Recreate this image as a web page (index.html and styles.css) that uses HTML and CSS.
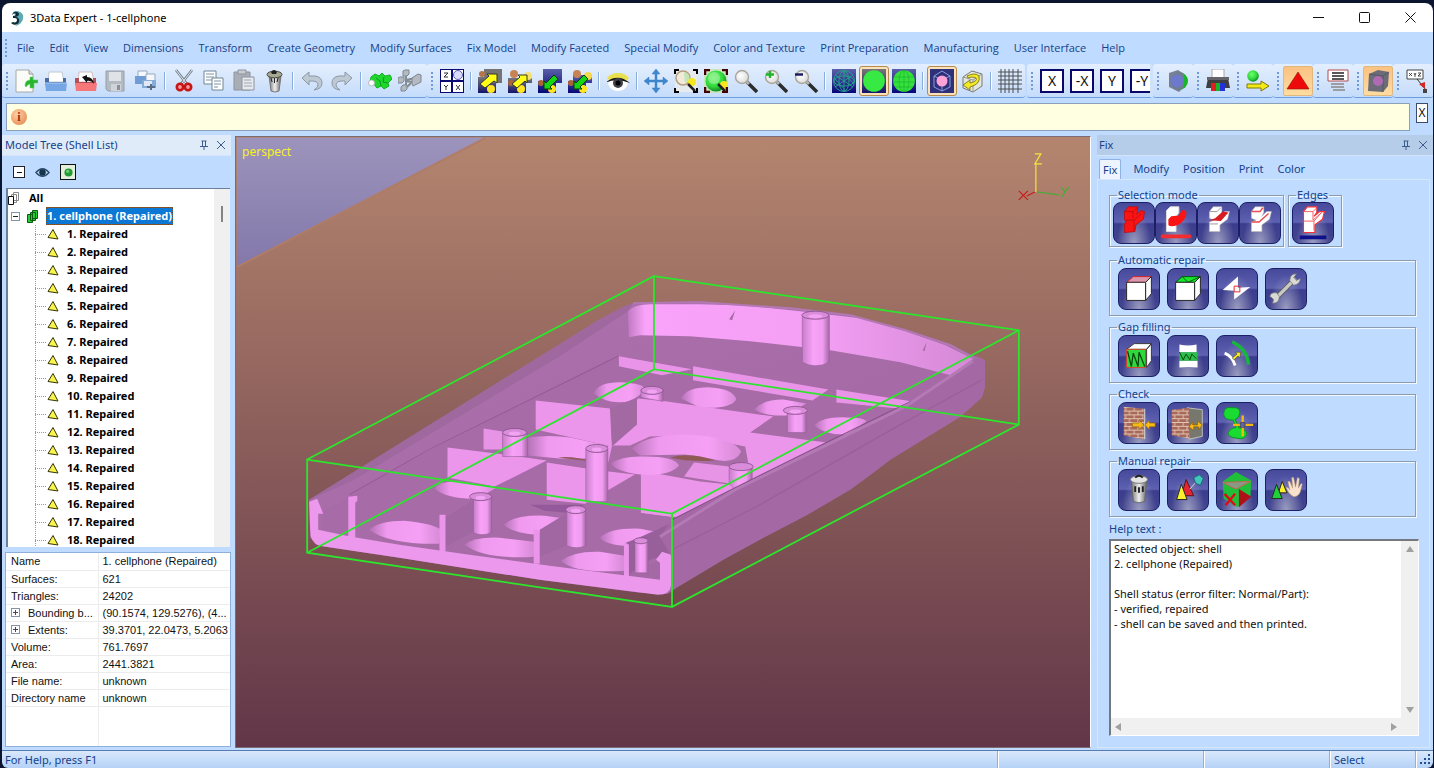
FILE: index.html
```html
<!DOCTYPE html>
<html lang="en">
<head>
<meta charset="utf-8">
<title>3Data Expert - 1-cellphone</title>
<link rel="stylesheet" href="styles.css">
</head>
<body>
<svg class="defs" aria-hidden="true">
  <defs>
    <linearGradient id="gBg" x1="0" y1="0" x2="0" y2="1"><stop offset="0" stop-color="#b4856e"/><stop offset="1" stop-color="#623648"/></linearGradient>
    <linearGradient id="gSky" x1="0" y1="0" x2="0" y2="1"><stop offset="0" stop-color="#9c94bc"/><stop offset="1" stop-color="#8378aa"/></linearGradient>
    <linearGradient id="gPost" x1="0" y1="0" x2="1" y2="0"><stop offset="0" stop-color="#c87ecb"/><stop offset=".4" stop-color="#f8a2f8"/><stop offset=".75" stop-color="#f09cf0"/><stop offset="1" stop-color="#a467a4"/></linearGradient>
    <linearGradient id="gRing" x1="0" y1="0" x2="1" y2="0"><stop offset="0" stop-color="#b472b6"/><stop offset=".25" stop-color="#f09aef"/><stop offset=".7" stop-color="#f6a0f5"/><stop offset="1" stop-color="#d68ad6"/></linearGradient>
    <linearGradient id="gWall" x1="0" y1="0" x2="1" y2="0"><stop offset="0" stop-color="#c079c2"/><stop offset=".05" stop-color="#f9a4fa"/><stop offset=".55" stop-color="#f49ff4"/><stop offset="1" stop-color="#d489d5"/></linearGradient>
    <linearGradient id="gSide" x1="0" y1="0" x2="1" y2="1"><stop offset="0" stop-color="#ae72ae"/><stop offset="1" stop-color="#a066a2"/></linearGradient>
    <radialGradient id="gGreen" cx=".4" cy=".35" r=".7"><stop offset="0" stop-color="#6dff6d"/><stop offset=".6" stop-color="#2fd83a"/><stop offset="1" stop-color="#0c7a22"/></radialGradient>
    <radialGradient id="gLens" cx=".4" cy=".4" r=".6"><stop offset="0" stop-color="#fff"/><stop offset="1" stop-color="#dcdcdc"/></radialGradient>
    <linearGradient id="gGray" x1="0" y1="0" x2="1" y2="0"><stop offset="0" stop-color="#777"/><stop offset=".5" stop-color="#eee"/><stop offset="1" stop-color="#666"/></linearGradient>
    <linearGradient id="gNavy" x1="0" y1="0" x2="0" y2="1"><stop offset="0" stop-color="#5c5fa8"/><stop offset="1" stop-color="#07077a"/></linearGradient>
    <linearGradient id="gBox" x1="0" y1="0" x2="0" y2="1"><stop offset="0" stop-color="#777"/><stop offset="1" stop-color="#14146c"/></linearGradient>
  </defs>

  <symbol id="i-logo" viewBox="0 0 14 16"><path d="M3 2c3-2 8-1 10 3 1 5-2 10-8 11 3-2 4-4 3-6z" fill="#5cabb2"/><path d="M2 5c1-4 6-4 7-1 0 2-2 3-4 3 3 0 5 2 4 5-1 3-5 4-8 1l2-1c2 1 4 0 4-2s-2-2-4-2V6c2 0 3-1 3-2-1-1-2-1-4 1z" fill="#0e2c38"/></symbol>
  <symbol id="i-new" viewBox="0 0 24 24"><path d="M2 1h13l4 4v18H2z" fill="#fbfcf8" stroke="#a8a8a8"/><path d="M15 1v4h4" fill="#ddd" stroke="#999"/><path d="M11 17q0-6 5-6V8h3v3h5v3h-4v5h-4v-4q-2 0-4 3z" fill="#27b52e" stroke="#68d268" stroke-width=".6"/></symbol>
  <symbol id="i-open" viewBox="0 0 24 24"><path d="M5 3h13l2 10H4z" fill="#fff" stroke="#c3c9d0"/><path d="M1 9h4v4h14V9h3v7H1z" fill="#4a6ba4"/><path d="M1 14h22l-1 8H2z" fill="#76a7e4"/><path d="M1 14h22" stroke="#aacdf8"/></symbol>
  <symbol id="i-openr" viewBox="0 0 24 24"><path d="M5 3h13l2 10H4z" fill="#fff" stroke="#d6bcbc"/><path d="M1 9h4v4h14V9h3v7H1z" fill="#b4505a"/><path d="M1 14h22l-1 8H2z" fill="#f5777a"/><path d="M8 8l5-2v2q6 0 7 7-3-4-7-3v2z" fill="#111"/></symbol>
  <symbol id="i-save" viewBox="0 0 24 24"><path d="M2 2h18v20H4l-2-2z" fill="#b4bac2" stroke="#989ea8"/><path d="M5 3h12v9H5z" fill="#dfe3e8"/><path d="M7 15h10v7H7z" fill="#d0d4da"/><path d="M13 16h3v5h-3z" fill="#8a9098"/></symbol>
  <symbol id="i-saveall" viewBox="0 0 24 24"><path d="M4 2h9v8H4z" fill="#f4f7fb" stroke="#99a9bd"/><path d="M1 7h14v8H1z" fill="#6f9bd6"/><path d="M12 5h9v9h-9z" fill="#f4f7fb" stroke="#99a9bd"/><path d="M8 11h14v8H8z" fill="#85acd8"/><path d="M10 12h8v5h-8z" fill="#dfe8f4"/><path d="M16 15h2v2h3v2h-3v2h-2v-2h-3v-2h3z" fill="#5a6b88"/></symbol>
  <symbol id="i-cut" viewBox="0 0 24 24"><path d="M4 1l11 14M20 1L9 15" stroke="#6f7b88" stroke-width="2.6"/><path d="M4 1l10 13M20 1L10 14" stroke="#e8edf2"/><circle cx="8" cy="18" r="3.2" fill="#f29a9a" stroke="#c81414" stroke-width="2.6"/><circle cx="16" cy="18" r="3.2" fill="#f29a9a" stroke="#c81414" stroke-width="2.6"/></symbol>
  <symbol id="i-copy" viewBox="0 0 24 24"><path d="M2 2h12v13H2z" fill="#fff" stroke="#6f8594"/><path d="M4 5h8M4 8h8M4 11h6" stroke="#7d93a5"/><path d="M10 9h11v12H10z" fill="#fff" stroke="#6f8594"/><path d="M12 12h7M12 15h7M12 18h4" stroke="#7d93a5"/></symbol>
  <symbol id="i-paste" viewBox="0 0 24 24"><path d="M2 3h16v18H2z" fill="#a9aeb6" stroke="#8c939d"/><path d="M6 1h8v4H6z" fill="#c8ccd2" stroke="#8c939d"/><path d="M10 8h12v13H10z" fill="#e6e9ee" stroke="#8c939d"/><path d="M12 11h7M12 14h8M12 17h8" stroke="#a0a7b0"/></symbol>
  <symbol id="i-trash" viewBox="0 0 24 24"><path d="M7 7h12l-2 15q-4 2-8 0z" fill="url(#gGray)" stroke="#777"/><path d="M9 9l1 4M12.500 9v5M16 9l-1 4" stroke="#222"/><ellipse cx="12.500" cy="5.500" rx="7.500" ry="3.300" fill="#a7a894" stroke="#44443a"/><path d="M9 3q3-4 6 0l-1 2h-4z" fill="#222"/></symbol>
  <symbol id="i-undo" viewBox="0 0 24 24"><path d="M2 9l7-6v4h6q7 1 7 7t-8 7q5-3 4-6-1-3-5-3H9v4z" fill="#bfc9d4" stroke="#8c98a6"/></symbol>
  <symbol id="i-redo" viewBox="0 0 24 24"><path d="M22 9l-7-6v4H9q-7 1-7 7t8 7q-5-3-4-6 1-3 5-3h4v4z" fill="#bfc9d4" stroke="#8c98a6"/></symbol>
  <symbol id="i-shells" viewBox="0 0 24 24"><path d="M3 8l4-3 4 2 3-3 3 3 5-1 2 4-4 4 1 3-5 3-3-3-4 2-4-5-3-1z" fill="#1ed62c" stroke="#12b022"/><path d="M8 9l4 3 1 5M16 8l-1 5 5 1" fill="none" stroke="#0c9a1a"/><circle cx="3.500" cy="14" r="3" fill="#fff" stroke="#b8b8b8"/></symbol>
  <symbol id="i-shells2" viewBox="0 0 24 24"><path d="M8 7v4l9-2M7 12l8 1M8 12v6M13 14l-4 4" fill="none" stroke="#858b93" stroke-width="2"/><g fill="#b4bac2" stroke="#80868e"><path d="M5 2l2-1h4v4l-2 2H5zM0 9l2-1h4v4l-2 2H0zM14 9l6-4 3 1v7l-8 4-1-2zM3 18l2-2h4v4l-2 2H3z"/></g></symbol>
  <symbol id="i-views" viewBox="0 0 24 24"><path d="M0 0h24v24H0z" fill="#0a0a72"/><path d="M1 1h10v10H1zM13 1h10v10H13zM1 13h10v10H1zM13 13h10v10H13z" fill="#fff"/><path d="M4 4h4l-4 4h4M4 16l2 2 2-2M6 18v3M16 16l4 5M20 16l-4 5" fill="none" stroke="#333"/><circle cx="18" cy="6" r="4.500" fill="#d9dcf6" stroke="#5c61b4"/></symbol>
  <symbol id="i-tr1" viewBox="0 0 24 24"><path d="M0 8h18v16H0z" fill="url(#gBox)"/><path d="M6 0h18v14H6z" fill="#747474"/><circle cx="4" cy="5" r="3" fill="#b4754c"/><circle cx="13" cy="20" r="4" fill="#ffe61e"/><path d="M2 15L11 7 9 5h10v9l-3-2-9 7z" fill="#ffff14" stroke="#333"/></symbol>
  <symbol id="i-tr2" viewBox="0 0 24 24"><path d="M0 9h24v5h-6v10H0z" fill="url(#gBox)"/><circle cx="6" cy="5" r="4" fill="#c88355"/><circle cx="20" cy="7" r="4" fill="#f5e072"/><circle cx="13" cy="20" r="4" fill="#ffe61e"/><circle cx="3" cy="14" r="3" fill="#a9643c"/><path d="M4 15L12 8l-2-2h9v8l-2-2-8 7z" fill="#ffff14" stroke="#333"/></symbol>
  <symbol id="i-tr3" viewBox="0 0 24 24"><path d="M0 12h5V0h19v14h-6v10H0z" fill="url(#gNavy)"/><circle cx="3" cy="14" r="3" fill="#a9643c"/><circle cx="14" cy="20" r="4" fill="#ffe61e"/><path d="M16 6l4 4-8 8 2 2H6v-8l2 2z" fill="#14d614" stroke="#043a04"/></symbol>
  <symbol id="i-tr4" viewBox="0 0 24 24"><path d="M0 12h5V6h19v8h-6v10H0z" fill="url(#gNavy)"/><circle cx="9" cy="5" r="4" fill="#c88355"/><circle cx="20" cy="7" r="4" fill="#f5d84a"/><circle cx="3" cy="14" r="3" fill="#a9643c"/><circle cx="15" cy="20" r="4" fill="#ffe61e"/><path d="M16 6l4 4-8 8 2 2H6v-8l2 2z" fill="#14d614" stroke="#043a04"/></symbol>
  <symbol id="i-eye" viewBox="0 0 24 24"><path d="M1 9Q5 4 12 4t11 5l-3 3H4z" fill="#e9e04e"/><path d="M2 14q10-9 20 0-2 8-10 8T2 14z" fill="#fff"/><path d="M0 13Q12 4 24 14q-12-5-24-1z" fill="#181818"/><circle cx="12" cy="14" r="5" fill="#3f4148"/><circle cx="12" cy="14" r="2.500" fill="#000"/></symbol>
  <symbol id="i-move" viewBox="0 0 24 24"><path d="M12 0l4 5h-3v6h6V8l5 4-5 4v-3h-6v6h3l-4 5-4-5h3v-6H5v3l-5-4 5-4v3h6V5H8z" fill="#3f86cc" stroke="#3f86cc" stroke-width=".5"/></symbol>
  <symbol id="i-zfit" viewBox="0 0 24 24"><path d="M1 1h22v22H1z" fill="#e7ebee"/><circle cx="9" cy="9" r="7" fill="#f1ead9" stroke="#b49c7e" stroke-width="1.500"/><path d="M10 3q7 1 5 9l-4 2z" fill="#bfe6b4"/><circle cx="18" cy="13" r="4" fill="#f6e71e"/><path d="M14 15l7 7" stroke="#222" stroke-width="2.500"/><path d="M1 5V1h4M19 1h4v4M23 19v4h-4M5 23H1v-4" stroke="#000" stroke-width="2" fill="none"/></symbol>
  <symbol id="i-zsel" viewBox="0 0 24 24"><path d="M0 0h24v24H0z" fill="#c7e6c0"/><circle cx="12" cy="12" r="10.500" fill="url(#gGreen)"/><circle cx="10" cy="9" r="6" fill="#a5f0a5" opacity=".6"/><circle cx="20" cy="16" r="4" fill="#f6e71e"/><path d="M14 15l7 7" stroke="#222" stroke-width="2.500"/><path d="M1 6V1h5M18 1h5v5M23 18v5h-5M6 23H1v-5" stroke="#400" stroke-width="2.500" fill="none"/></symbol>
  <symbol id="i-zoom" viewBox="0 0 24 24"><path d="M12 12l11 11" stroke="#2b2b2b" stroke-width="3.400"/><path d="M11 11l4 4" stroke="#b4b4b4" stroke-width="3"/><circle cx="8" cy="8" r="6.500" fill="url(#gLens)" stroke="#a9a59a" stroke-width="1.400"/></symbol>
  <symbol id="i-zin" viewBox="0 0 24 24"><use href="#i-zoom"/><path d="M6 2v7M2 5.500h8" stroke="#1eb428" stroke-width="2.400"/></symbol>
  <symbol id="i-zout" viewBox="0 0 24 24"><use href="#i-zoom"/><path d="M1 5.500h8" stroke="#15155c" stroke-width="2.400"/></symbol>
  <symbol id="i-wire" viewBox="0 0 24 24"><path d="M0 0h24v24H0z" fill="url(#gNavy)"/><g fill="none" stroke="#259b8c"><circle cx="12" cy="12" r="10.500"/><ellipse cx="12" cy="12" rx="5" ry="10"/><ellipse cx="12" cy="12" rx="10" ry="5"/><path d="M3 6l18 12M3 18L21 6M12 1v22M2 9l12 13M10 2l12 13"/></g></symbol>
  <symbol id="i-solid" viewBox="0 0 24 24"><path d="M0 0h24v24H0z" fill="url(#gBox)"/><circle cx="12" cy="12" r="10.800" fill="#37ea43"/></symbol>
  <symbol id="i-mesh" viewBox="0 0 24 24"><path d="M0 0h24v24H0z" fill="url(#gNavy)"/><circle cx="12" cy="12" r="10.800" fill="#33e03c"/><g fill="none" stroke="#1fae2e" stroke-width=".6"><ellipse cx="12" cy="12" rx="5" ry="10.500"/><path d="M2 8h20M1 13h22M3 18h18M12 1v22"/></g></symbol>
  <symbol id="i-bbox" viewBox="0 0 24 24"><path d="M0 0h24v24H0z" fill="#2e3078"/><path d="M12 2l8 5v11l-8 4-8-4V7zM4 7l8 4 8-4M12 11v11" fill="none" stroke="#8e9ae0"/><circle cx="12" cy="12" r="5.500" fill="#ffa2d8"/></symbol>
  <symbol id="i-rot" viewBox="0 0 24 24"><path d="M3 8l9-6 10 3v12l-9 6-10-4z" fill="#e4e8dc" stroke="#77786e"/><path d="M3 8l10 3v12M13 11l9-6" fill="none" stroke="#99998e"/><path d="M7 7q8-4 12 0 2 8-9 11v3l-7-5 7-5v3q8-2 6-5-4-2-8 0z" fill="#f2e824" stroke="#6e6810" stroke-width=".8"/></symbol>
  <symbol id="i-grid" viewBox="0 0 24 24"><path d="M3 0v24M7 0v24M11 0v24M15 0v24M20 0v24M0 3h24M0 7h24M0 11h24M0 15h24M0 20h24" stroke="#4d4f52"/></symbol>
  <symbol id="i-cut3d" viewBox="0 0 24 24"><circle cx="13" cy="12" r="9" fill="#19b428"/><path d="M3 4l9-3 6 4v13l-5 5-10-5z" fill="#747a92" opacity=".95"/><circle cx="11" cy="12" r="6.500" fill="#6c79cd"/></symbol>
  <symbol id="i-print" viewBox="0 0 24 24"><path d="M6 0h12v10H6z" fill="#fff" stroke="#a8a8a8"/><path d="M2 9h20l2 10H0z" fill="#3d3d42"/><path d="M1 8h22v3H1z" fill="#64646a"/><path d="M5 14h5v8H5z" fill="#e02020"/><path d="M10 14h4v8h-4z" fill="#19b428"/><path d="M14 14h5v8h-5z" fill="#2430d8"/></symbol>
  <symbol id="i-ballarrow" viewBox="0 0 24 24"><circle cx="7" cy="7" r="5.800" fill="url(#gGreen)"/><path d="M1 15h14v-3l8 5-8 5v-3H1z" fill="#f2ea14" stroke="#7d7810"/></symbol>
  <symbol id="i-tri" viewBox="0 0 24 24"><path d="M12 3l11 17H1z" fill="#ee0a0a" stroke="#8d1508" stroke-width=".6"/></symbol>
  <symbol id="i-list" viewBox="0 0 24 24"><path d="M2 1h20v11H2z" fill="#fff" stroke="#b04a50"/><path d="M6 4h12M6 7h12M6 10h12" stroke="#222" stroke-width="1.400"/><path d="M5 15h13M5 18h13M7 21h12" stroke="#9a9da4" stroke-width="2"/></symbol>
  <symbol id="i-cube" viewBox="0 0 24 24"><path d="M3 5l9-4 11 2-1 14-5 6-15-1z" fill="#6b6c78"/><path d="M3 5l14 2 6-4M17 7v16" fill="none" stroke="#565866"/><circle cx="12" cy="12" r="5" fill="#b06ab4"/></symbol>
  <symbol id="i-xyz" viewBox="0 0 24 24"><path d="M1 1h16v9H1z" fill="#fff" stroke="#444"/><path d="M3 4l3 3M6 4L3 7M8 4l1 2 1-2M9 6v2M12 4h3l-3 3h3" stroke="#222" fill="none" stroke-width=".8"/><path d="M11 10l9 11" stroke="#333"/><path d="M13 15l6-2v7z" fill="#d62525"/><path d="M17 20h4v4h-4z" fill="#444"/></symbol>

  <symbol id="i-pin" viewBox="0 0 10 10"><path d="M2.500 1h5M3.500 1v5M6.500 1v5M1 6.500h8M5 6v4" stroke="#3c5c8c" fill="none"/></symbol>
  <symbol id="i-x" viewBox="0 0 10 10"><path d="M1 1l8 8M9 1L1 9" stroke="#3c5c8c"/></symbol>
  <symbol id="i-warn" viewBox="0 0 12 12"><path d="M6 1l5 9.500L1 9z" fill="#f8f44a" stroke="#33330a"/></symbol>
  <symbol id="i-stack" viewBox="0 0 12 13"><path d="M5.500.500h5v8h-5zM3.500 2.500h5v8h-5z" fill="#fff" stroke="#888"/><path d="M.500 4.500h5v8h-5z" fill="#fff" stroke="#111"/></symbol>
  <symbol id="i-stackg" viewBox="0 0 12 13"><path d="M5.500.500h5v8h-5zM3.500 2.500h5v8h-5zM.500 4.500h5v8h-5z" fill="#28cc38" stroke="#0a5a12"/></symbol>

  <symbol id="b-sel1" viewBox="0 0 42 42"><path d="M11 9l4-5h10l-1 8 4-4 4 1-1 8-8 6-1 7-11 1v-9l2-3-2-1z" fill="#fb1414" stroke="#b80d10" stroke-width=".8"/><path d="M11 9h9l4-4M20 9v7M12 18h9l8-7M21 18v12" stroke="#c40e10" fill="none"/></symbol>
  <symbol id="b-sel2" viewBox="0 0 42 42"><path d="M11 8l4-4h9v6l-3 5h-5l-1 7 6 1v7H11z" fill="#fff" stroke="#ddd"/><path d="M13 17l3-3 8-1 3-5q4-2 5 3-1 8-9 12-8 3-10 0z" fill="#fb1414"/><path d="M7 35h28" stroke="#f32c30" stroke-width="4" stroke-linecap="round"/></symbol>
  <symbol id="b-sel3" viewBox="0 0 42 42"><path d="M12 9l4-5h9v6l-2 4 5-5h5l-2 8-8 6v7H12V20l5-2-5-2z" fill="#fff" stroke="#bbb" stroke-width=".6"/><path d="M12 18l6-2 8-7 6 1-8 9z" fill="#d81c22"/><path d="M12 22h9M12 9h8l4-4" stroke="#999" fill="none"/></symbol>
  <symbol id="b-sel4" viewBox="0 0 42 42"><path d="M12 9l4-5h9v6l-2 4 5-5h5l-2 8-8 6v7H12V20l5-2-5-2z" fill="#fff" stroke="#bbb" stroke-width=".6"/><path d="M12 20h8l10-9M12 9h9l3-4" fill="none" stroke="#ec4a50" stroke-width="1.500"/></symbol>
  <symbol id="b-sel5" viewBox="0 0 42 42"><path d="M11 9l4-5h10v6l-3 4 6-5h5l-2 8-8 6v8H11z" fill="#fff" stroke="#f33238" stroke-width="1.200"/><path d="M11 9h10v9l9-8M11 19h11v10M21 9l4-4M22 19l8-9" fill="none" stroke="#f35a5e"/><path d="M7 36h28" stroke="#10108a" stroke-width="4"/></symbol>
  <symbol id="b-box1" viewBox="0 0 42 42"><path d="M8 14l7-6h19l-6 6z" fill="#d998ae" stroke="#d41e26"/><path d="M8 14h20v19H8z" fill="#fff" stroke="#222"/><path d="M28 14l6-6v18l-6 7z" fill="#fff" stroke="#222"/></symbol>
  <symbol id="b-box2" viewBox="0 0 42 42"><path d="M8 14l7-6h19l-6 6z" fill="#16e82c" stroke="#064f0c"/><path d="M15 8l6 6 13-6" fill="none" stroke="#064f0c"/><path d="M8 14h20v19H8z" fill="#fff" stroke="#222"/><path d="M28 14l6-6v18l-6 7z" fill="#fff" stroke="#222"/></symbol>
  <symbol id="b-cross" viewBox="0 0 42 42"><path d="M6 22L22 8v15z" fill="#fff"/><path d="M18 20l17-1-17 13z" fill="#fff"/><path d="M18 18h6v6h-6z" fill="none" stroke="#e02028"/></symbol>
  <symbol id="b-wrench" viewBox="0 0 42 42"><path d="M9 32L31 10" stroke="#555" stroke-width="5"/><path d="M9 32L31 10" stroke="#c9c9c4" stroke-width="3.500"/><path d="M25 12q0-7 7-7l-3 4 3 3 4-2q0 6-7 7zM4 29q1-5 7-4l3 4q0 7-7 7l1-4-2-2z" fill="#d9d9d4" stroke="#777" stroke-width=".7"/></symbol>
  <symbol id="b-gap1" viewBox="0 0 42 42"><path d="M8 14l8-6h18l-5 6zM29 14l5-6v18l-5 7z" fill="#fff" stroke="#333"/><path d="M8 14h20v19H8z" fill="#2fd83c" stroke="#e23c2a"/><path d="M9 16l4 16 2-14 5 14 1-15 6 15" fill="none" stroke="#06430b" stroke-width="1.300"/></symbol>
  <symbol id="b-gap2" viewBox="0 0 42 42"><path d="M12 9q9 2 18 0v8H12zM12 26h19v7q-10-1-19 0z" fill="#fff"/><path d="M12 17h19v9H12z" fill="#2fbf4c"/><path d="M12 17l4 8 3-6 4 6 2-6 5 5" fill="none" stroke="#06430b"/></symbol>
  <symbol id="b-gap3" viewBox="0 0 42 42"><path d="M16 6q16 8 17 24" fill="none" stroke="#16b83a" stroke-width="3.500"/><path d="M8 18q8 3 11 13" fill="none" stroke="#fff" stroke-width="3"/><path d="M16 23l5-4-2-2h6l-1 6-2-2-4 4z" fill="#f6ec1e" stroke="#444" stroke-width=".7"/></symbol>
  <pattern id="pBrick" width="9" height="8" patternUnits="userSpaceOnUse"><path d="M0 0h9v8H0z" fill="#a8685a"/><path d="M0 .500h9M0 4.500h9M2 0v4M7 4v4" stroke="#e2c7b4"/></pattern>
  <symbol id="b-wall1" viewBox="0 0 42 42"><path d="M5 4l21 2v32L5 34z" fill="url(#pBrick)"/><path d="M27 6v32" stroke="#e8e2c8"/><path d="M14 21h7v-3l5 5-5 5v-3h-7zM38 21h-6v-3l-5 5 5 5v-3h6z" fill="#f7ba16" stroke="#8c5d08" stroke-width=".7"/></symbol>
  <symbol id="b-wall2" viewBox="0 0 42 42"><path d="M20 5l16 2v28l-14 3z" fill="#77776d" stroke="#d8d8c8" stroke-width=".8"/><path d="M4 7l18-2v32L4 34z" fill="url(#pBrick)"/><path d="M22 25l4-5v3h5v-4l5 4-4 5v-3h-5v4z" fill="#f7ba16" stroke="#8c5d08" stroke-width=".7"/></symbol>
  <symbol id="b-target" viewBox="0 0 42 42"><path d="M7 12q0-9 9-7 8-1 8 5-1 6-5 7l4 9q8 1 8 7-2 6-10 4-10-1-9-6 2-5 8-5l-3-8q-9 0-10-6z" fill="#19db32" stroke="#0a9420"/><circle cx="27" cy="23" r="3" fill="none" stroke="#444"/><path d="M27 13v7M27 26v9M17 23h7M30 23h8" stroke="#f5b90e" stroke-width="2.500"/></symbol>
  <symbol id="b-trash" viewBox="0 0 42 42"><path d="M13 11h16l-2 22q-6 3-12 0z" fill="url(#gGray)" stroke="#666"/><path d="M17 17v6M21 18v6M25 17v6" stroke="#222" stroke-width="2"/><ellipse cx="21" cy="10" rx="9" ry="4" fill="#e4e4e4" stroke="#777"/><path d="M17 8q4-4 8 0" fill="none" stroke="#222" stroke-width="2"/></symbol>
  <symbol id="b-pick" viewBox="0 0 42 42"><path d="M19 10l8 17H14z" fill="#e32632" stroke="#591014"/><path d="M14 15l6 16H9z" fill="#faf12c" stroke="#222"/><path d="M23 20l8-9" stroke="#ddd"/><path d="M27 8l6-3 4 4-3 7-5-2z" fill="#42c6bc" stroke="#156c70"/></symbol>
  <symbol id="b-del" viewBox="0 0 42 42"><path d="M6 12l14-10 16 9-1 17-14 11L7 30z" fill="#1fbf39"/><path d="M6 13l29-1-15 8z" fill="#889a84" stroke="#cf6059"/><path d="M23 20l13 8-13 11z" fill="#b01018"/><path d="M8 25l11 12M19 25L9 37" stroke="#d90f18" stroke-width="2.600"/></symbol>
  <symbol id="b-hand" viewBox="0 0 42 42"><path d="M17 12l5 12h-9z" fill="#faf12c" stroke="#222"/><path d="M11 15l6 15H6z" fill="#1fd03a" stroke="#222"/><path d="M21 18q3 0 4 3l-2-9h2l3 7-1-11h2l2 10 2-10 2 1-1 10 3-5 1 1-2 8q-2 5-7 5-5-2-8-10z" fill="#f8e2cb" stroke="#b79a7d" stroke-width=".6"/></symbol>
</svg>

<div class="app">
  <header class="titlebar">
    <svg class="logo"><use href="#i-logo"/></svg>
    <h1>3Data Expert - 1-cellphone</h1>
    <div class="wincontrols">
      <button aria-label="Minimize"><svg viewBox="0 0 11 11"><path d="M0 5.500h11"/></svg></button>
      <button aria-label="Maximize"><svg viewBox="0 0 11 11"><rect x=".500" y=".500" width="10" height="10" rx="1"/></svg></button>
      <button aria-label="Close"><svg viewBox="0 0 11 11"><path d="M.500.500l10 10M10.500.500l-10 10"/></svg></button>
    </div>
  </header>

  <nav class="menubar">
    <span class="grip"></span>
    <button>File</button><button>Edit</button><button>View</button><button>Dimensions</button><button>Transform</button><button>Create Geometry</button><button>Modify Surfaces</button><button>Fix Model</button><button>Modify Faceted</button><button>Special Modify</button><button>Color and Texture</button><button>Print Preparation</button><button>Manufacturing</button><button>User Interface</button><button>Help</button>
  </nav>

  <div class="toolbars">
    <div class="toolbar">
      <span class="grip"></span>
      <button aria-label="New"><svg><use href="#i-new"/></svg></button>
      <button aria-label="Open"><svg><use href="#i-open"/></svg></button>
      <button aria-label="Import"><svg><use href="#i-openr"/></svg></button>
      <button aria-label="Save"><svg><use href="#i-save"/></svg></button>
      <button aria-label="Save all"><svg><use href="#i-saveall"/></svg></button>
      <span class="sep"></span>
      <button aria-label="Cut"><svg><use href="#i-cut"/></svg></button>
      <button aria-label="Copy"><svg><use href="#i-copy"/></svg></button>
      <button aria-label="Paste"><svg><use href="#i-paste"/></svg></button>
      <button aria-label="Delete"><svg><use href="#i-trash"/></svg></button>
      <span class="sep"></span>
      <button aria-label="Undo"><svg><use href="#i-undo"/></svg></button>
      <button aria-label="Redo"><svg><use href="#i-redo"/></svg></button>
      <span class="sep"></span>
      <button aria-label="Join shells"><svg><use href="#i-shells"/></svg></button>
      <button aria-label="Split shells"><svg><use href="#i-shells2"/></svg></button>
    </div>
    <div class="toolbar main">
      <span class="grip"></span>
      <button aria-label="Four views"><svg><use href="#i-views"/></svg></button>
      <span class="sep"></span>
      <button aria-label="Show"><svg><use href="#i-tr1"/></svg></button>
      <button aria-label="Show all"><svg><use href="#i-tr2"/></svg></button>
      <button aria-label="Hide"><svg><use href="#i-tr3"/></svg></button>
      <button aria-label="Hide all"><svg><use href="#i-tr4"/></svg></button>
      <span class="sep"></span>
      <button aria-label="Visibility"><svg><use href="#i-eye"/></svg></button>
      <span class="sep"></span>
      <button aria-label="Pan"><svg><use href="#i-move"/></svg></button>
      <button aria-label="Zoom all"><svg><use href="#i-zfit"/></svg></button>
      <button aria-label="Zoom selected"><svg><use href="#i-zsel"/></svg></button>
      <button aria-label="Zoom"><svg><use href="#i-zoom"/></svg></button>
      <button aria-label="Zoom in"><svg><use href="#i-zin"/></svg></button>
      <button aria-label="Zoom out"><svg><use href="#i-zout"/></svg></button>
      <span class="sep"></span>
      <button aria-label="Wireframe"><svg><use href="#i-wire"/></svg></button>
      <button class="on" aria-label="Shaded"><svg><use href="#i-solid"/></svg></button>
      <button aria-label="Shaded with mesh"><svg><use href="#i-mesh"/></svg></button>
      <span class="sep"></span>
      <button class="on" aria-label="Bounding box"><svg><use href="#i-bbox"/></svg></button>
      <button aria-label="Rotate"><svg><use href="#i-rot"/></svg></button>
      <span class="sep"></span>
      <button aria-label="Grid"><svg><use href="#i-grid"/></svg></button>
    </div>
    <div class="toolbar axes">
      <span class="grip"></span>
      <button><span class="axis">X</span></button><button><span class="axis">-X</span></button><button><span class="axis">Y</span></button><button><span class="axis">-Y</span></button>
    </div>
    <div class="toolbar"><span class="grip"></span><button aria-label="Section"><svg><use href="#i-cut3d"/></svg></button></div>
    <div class="toolbar"><span class="grip"></span><button aria-label="Print"><svg><use href="#i-print"/></svg></button></div>
    <div class="toolbar"><span class="grip"></span><button aria-label="Move part"><svg><use href="#i-ballarrow"/></svg></button></div>
    <div class="toolbar"><span class="grip"></span><button class="hot" aria-label="Triangles"><svg><use href="#i-tri"/></svg></button></div>
    <div class="toolbar"><span class="grip"></span><button aria-label="Report"><svg><use href="#i-list"/></svg></button></div>
    <div class="toolbar"><span class="grip"></span><button class="hot" aria-label="Platform"><svg><use href="#i-cube"/></svg></button></div>
    <div class="toolbar"><span class="grip"></span><button aria-label="Coordinates"><svg><use href="#i-xyz"/></svg></button></div>
  </div>

  <div class="infobar">
    <div class="message"><span class="info">i</span></div>
    <button aria-label="Close message">X</button>
  </div>

  <main class="workspace">
    <aside class="left">
      <div class="panelhead"><h2>Model Tree (Shell List)</h2><button aria-label="Pin"><svg><use href="#i-pin"/></svg></button><button aria-label="Close"><svg><use href="#i-x"/></svg></button></div>
      <div class="treetools">
        <button class="minus" aria-label="Collapse all"></button>
        <button aria-label="Toggle visibility"><svg viewBox="0 0 16 12"><path d="M1 6q7-8 14 0-7 8-14 0z" fill="#c8dcf0" stroke="#2b4a6e" stroke-width="1.400"/><circle cx="8" cy="6" r="3.500" fill="#17344f"/></svg></button>
        <button class="framed" aria-label="Shading"><svg viewBox="0 0 16 16"><circle cx="8" cy="8" r="5" fill="#239b33"/><circle cx="7" cy="6.500" r="2" fill="#6fce78"/></svg></button>
      </div>
      <div class="treebox">
        <ul class="tree">
          <li class="all"><svg><use href="#i-stack"/></svg><b>All</b></li>
          <li class="shell"><span class="box"></span><svg><use href="#i-stackg"/></svg><b>1. cellphone (Repaired)</b></li>
          <li><svg><use href="#i-warn"/></svg><b>1. Repaired</b></li>
          <li><svg><use href="#i-warn"/></svg><b>2. Repaired</b></li>
          <li><svg><use href="#i-warn"/></svg><b>3. Repaired</b></li>
          <li><svg><use href="#i-warn"/></svg><b>4. Repaired</b></li>
          <li><svg><use href="#i-warn"/></svg><b>5. Repaired</b></li>
          <li><svg><use href="#i-warn"/></svg><b>6. Repaired</b></li>
          <li><svg><use href="#i-warn"/></svg><b>7. Repaired</b></li>
          <li><svg><use href="#i-warn"/></svg><b>8. Repaired</b></li>
          <li><svg><use href="#i-warn"/></svg><b>9. Repaired</b></li>
          <li><svg><use href="#i-warn"/></svg><b>10. Repaired</b></li>
          <li><svg><use href="#i-warn"/></svg><b>11. Repaired</b></li>
          <li><svg><use href="#i-warn"/></svg><b>12. Repaired</b></li>
          <li><svg><use href="#i-warn"/></svg><b>13. Repaired</b></li>
          <li><svg><use href="#i-warn"/></svg><b>14. Repaired</b></li>
          <li><svg><use href="#i-warn"/></svg><b>15. Repaired</b></li>
          <li><svg><use href="#i-warn"/></svg><b>16. Repaired</b></li>
          <li><svg><use href="#i-warn"/></svg><b>17. Repaired</b></li>
          <li><svg><use href="#i-warn"/></svg><b>18. Repaired</b></li>
        </ul>
        <div class="treescroll"><span></span></div>
      </div>
      <div class="props">
        <table>
          <tr><th>Name</th><td>1. cellphone (Repaired)</td></tr>
          <tr><th>Surfaces:</th><td>621</td></tr>
          <tr><th>Triangles:</th><td>24202</td></tr>
          <tr><th><span class="box plus"></span>Bounding b...</th><td>(90.1574, 129.5276), (4...</td></tr>
          <tr><th><span class="box plus"></span>Extents:</th><td>39.3701, 22.0473, 5.2063</td></tr>
          <tr><th>Volume:</th><td>761.7697</td></tr>
          <tr><th>Area:</th><td>2441.3821</td></tr>
          <tr><th>File name:</th><td>unknown</td></tr>
          <tr><th>Directory name</th><td>unknown</td></tr>
          <tr class="rest"><th></th><td></td></tr>
        </table>
      </div>
    </aside>

    <section class="viewport" aria-label="3D view">
      <svg viewBox="237 138 852 609" preserveAspectRatio="xMidYMid slice">
        <rect x="237" y="138" width="852" height="609" fill="url(#gBg)"/>
        <path d="M238 139H486L238 268z" fill="url(#gSky)"/>
        <path d="M486 139L238 268" stroke="#b07c68" stroke-width="2"/>
        <text x="243" y="157" class="vlabel">perspect</text>

        <path d="M310 500L600 320L625 307L636 303L700 302L790 309L850 316L905 330L950 346L984 361L984 388L981 398L960 417L890 460L873 473L850 490L807 515L763 538L723 560L678 587L668 594L640 593L540 580L400 558L320 546L311 538z" fill="url(#gSide)"/>
        <path d="M310 500L600 320L625 307L633 304L628 312L560 357L430 435L352 482z" fill="#9f689f"/>
        <path d="M350 495L430 450L618 357" fill="none" stroke="#935a94"/>
        <path d="M324 512L430 450L610 362L619 357L900 403L664 560L620 575L540 565L400 543L322 529z" fill="#a76ba7"/>
        <path d="M628 312Q634 305 650 305H700L740 306L800 312L860 319L905 332L945 346L973 360L950 376L900 363L830 351L750 342L690 337L640 336L629 338z" fill="url(#gWall)"/>
        <path d="M633 304L700 303L790 309L850 316L905 331L950 346L975 360" fill="none" stroke="#b377b4" stroke-width="2"/>
        <path d="M976 357L984 361L984 388L981 398L956 416L905 404L915 400L950 376z" fill="#a76da7"/>
        <path d="M735 311L732 321L729 320zM926 343L924 352L922 351z" fill="#a86ca6"/>
        <path d="M619 357L692 370L662 376L619 367zM693 367L828 390L812 401L693 381zM836 390L912 402L898 409L836 403z" fill="#ea94e9"/>

        <path d="M594 394Q598 383 620 383Q645 384 646 391L632 401Q610 407 594 394z" fill="url(#gRing)"/>
        <path d="M681 399Q687 388 708 388Q733 389 736 400Q730 410 700 408z" fill="url(#gRing)"/>
        <path d="M754 410Q763 400 783 400L806 404L786 416Q765 417 754 410z" fill="url(#gRing)"/>
        <path d="M814 426Q822 417 846 418Q864 418 866 422L846 435Q825 436 814 426z" fill="url(#gRing)"/>
        <path d="M638 399L660 401L773 417L750 433L826 443L760 477L700 507L680 518L641 513L641 474L600 460z" fill="#ec96eb"/>
        <path d="M612 447L637 425L672 432L745 447L748 463L730 465L729 485L700 482L608 465z" fill="#a86ca6"/>
        <path d="M638 418L680 427L748 439L748 447L686 436L650 437L630 446L612 446L638 424z" fill="#ec96eb"/>
        <path d="M632 449Q646 435 686 435Q733 437 741 452Q735 466 710 459L685 455L640 456z" fill="url(#gRing)"/>
        <path d="M670 458Q690 452 715 461Q690 463 670 458z" fill="#8f5a55"/>
        <path d="M611 464Q622 456 645 457Q675 457 679 466Q670 477 640 475Q616 472 611 464z" fill="url(#gRing)"/>
        <path d="M684 477L694 463L729 467L729 484z" fill="#e794e7"/>
        <path d="M641 475L684 480L729 488L740 492L680 518L641 513z" fill="#ec96eb"/>
        <path d="M536 401L610 409L612 447L536 430z" fill="#ec96eb"/>
        <path d="M611 409L637 398V425L612 447z" fill="#a269a3"/>
        <path d="M484 429L503 432V450H484z" fill="#e794e7"/>
        <path d="M528 438Q550 435 570 438L608 446L600 459L560 459L528 456z" fill="url(#gRing)"/>
        <path d="M558 458Q573 456 592 462L575 460z" fill="#8f5a55"/>
        <path d="M448 448L505 455L547 461L495 487L448 478z" fill="#ec96eb"/>
        <path d="M547 463L600 471L635 475L585 504L547 500z" fill="#ec96eb"/>
        <path d="M435 489Q440 481 460 482L497 488L478 499Q448 500 435 489z" fill="url(#gRing)"/>
        <path d="M530 505L585 505L567 513L545 511z" fill="#94599a"/>
        <path d="M370 530Q380 521 405 521Q435 524 441 530L440 544Q390 545 370 530z" fill="url(#gRing)"/>
        <path d="M504 525Q515 515 545 516L567 519L536 535Q512 533 504 525z" fill="url(#gRing)"/>
        <path d="M465 545Q475 537 500 538L535 542V557Q485 560 465 545z" fill="url(#gRing)"/>
        <path d="M600 538Q610 528 640 529L662 533L626 546Q606 545 600 538z" fill="url(#gRing)"/>
        <path d="M561 561Q575 551 600 552L625 556V571Q575 574 561 561z" fill="url(#gRing)"/>
        <path d="M446 518L475 500V531L446 547zM540 530L568 513V545L540 557z" fill="#a067a2"/>
        <path d="M641 537L670 524V553L650 560L635 570L626 577V543z" fill="#98609a"/>
        <path d="M349 497L358 496V501L356 503V540H349zM440 515H446V552H440zM534 529L540 531V564H534zM624 542L629 545V577H624z" fill="#ea94ea"/>
        <path d="M310 502L318 499L324 514H319V530L352 537L400 545L470 555L550 566L620 575L660 580V563L656 560L662 552L671 555V586Q670 595 658 595L540 580L400 558L320 546Q311 543 311 530z" fill="#ec98ec"/>

        <g stroke="#98609a" stroke-width=".6">
          <path d="M802 316V363Q815 370 829 363V316z" fill="url(#gPost)"/>
          <path d="M641 391V398L663 402V391z" fill="url(#gPost)"/>
          <path d="M787 411V433H806V411z" fill="url(#gPost)"/>
          <path d="M503 434V457H528V434z" fill="url(#gPost)"/>
          <path d="M586 450V502H608V450z" fill="url(#gPost)"/>
          <path d="M474 498V533Q482 537 492 533V498z" fill="url(#gPost)"/>
          <path d="M567 511V546Q577 550 586 546V511z" fill="url(#gPost)"/>
          <path d="M729 468V484L735 490L752 479V468z" fill="url(#gPost)"/>
          <path d="M635 541V573H648V541z" fill="url(#gPost)"/>
        </g>
        <g fill="#d98cda" stroke="#875088" stroke-width=".8">
          <ellipse cx="815" cy="316" rx="13.500" ry="4"/><ellipse cx="652" cy="391" rx="11" ry="4"/><ellipse cx="795" cy="411" rx="12" ry="4"/><ellipse cx="515" cy="433" rx="12" ry="4"/><ellipse cx="597" cy="449" rx="11" ry="4"/><ellipse cx="481" cy="497" rx="11" ry="4"/><ellipse cx="576" cy="510" rx="10" ry="4"/><ellipse cx="741" cy="467" rx="12" ry="4"/><ellipse cx="641" cy="541" rx="7" ry="3"/>
        </g>
        <g fill="#f3a3f3"><ellipse cx="815" cy="317" rx="7" ry="2"/><ellipse cx="652" cy="392" rx="5" ry="2"/><ellipse cx="795" cy="412" rx="6" ry="2"/><ellipse cx="515" cy="434" rx="6" ry="2"/><ellipse cx="597" cy="450" rx="5" ry="2"/><ellipse cx="481" cy="498" rx="5" ry="2"/><ellipse cx="576" cy="511" rx="5" ry="2"/></g>

        <path d="M660 537L672 520L735 488L912 404L950 377L978 359L984 362V388L981 398L960 417L890 460L873 473L850 490L807 515L763 538L723 560L678 587L671 590V556z" fill="#a468a5"/>
        <path d="M660 537L735 490L905 407L972 362" fill="none" stroke="#b47ab5" stroke-width="3"/>
        <path d="M672 520L735 488L826 443L910 402" fill="none" stroke="#854f87"/>
        <path d="M674 549L760 505L900 425L982 380" fill="none" stroke="#985d99"/>

        <path d="M654 277L1018 331V425L654 370zM308 460L672 514V607L308 553zM654 277L308 460M1018 331L672 514M1018 425L672 607M654 370L308 553" fill="none" stroke="#2be62b" stroke-width="1.800"/>
        <g fill="none" stroke-width="1.200"><path d="M1035 193V165M1034 155H1040L1034 165H1041" stroke="#f2e63c"/><path d="M1034 193L1026 197M1018 192L1027 201M1027 192L1018 201" stroke="#c81c1c"/><path d="M1036 193L1058 196M1060 188L1064 193L1068 188M1064 193L1061 198" stroke="#4ea83a"/></g>
      </svg>
    </section>

    <aside class="right">
      <div class="panelhead dim"><h2>Fix</h2><button aria-label="Pin"><svg><use href="#i-pin"/></svg></button><button aria-label="Close"><svg><use href="#i-x"/></svg></button></div>
      <div class="tabs"><button class="active">Fix</button><button>Modify</button><button>Position</button><button>Print</button><button>Color</button></div>
      <div class="page">
        <div class="row">
          <fieldset class="tight"><legend>Selection mode</legend>
            <button aria-label="Select shell"><svg><use href="#b-sel1"/></svg></button><button aria-label="Select surface"><svg><use href="#b-sel2"/></svg></button><button aria-label="Select plane"><svg><use href="#b-sel3"/></svg></button><button aria-label="Select triangle"><svg><use href="#b-sel4"/></svg></button>
          </fieldset>
          <fieldset class="tight edges"><legend>Edges</legend><button aria-label="Select edges"><svg><use href="#b-sel5"/></svg></button></fieldset>
        </div>
        <fieldset><legend>Automatic repair</legend>
          <button aria-label="Stitch"><svg><use href="#b-box1"/></svg></button><button aria-label="Fill holes"><svg><use href="#b-box2"/></svg></button><button aria-label="Fix intersections"><svg><use href="#b-cross"/></svg></button><button aria-label="Repair all"><svg><use href="#b-wrench"/></svg></button>
        </fieldset>
        <fieldset><legend>Gap filling</legend>
          <button aria-label="Fill side"><svg><use href="#b-gap1"/></svg></button><button aria-label="Bridge gap"><svg><use href="#b-gap2"/></svg></button><button aria-label="Join edges"><svg><use href="#b-gap3"/></svg></button>
        </fieldset>
        <fieldset><legend>Check</legend>
          <button aria-label="Wall thickness"><svg><use href="#b-wall1"/></svg></button><button aria-label="Gap thickness"><svg><use href="#b-wall2"/></svg></button><button aria-label="Locate"><svg><use href="#b-target"/></svg></button>
        </fieldset>
        <fieldset><legend>Manual repair</legend>
          <button aria-label="Delete"><svg><use href="#b-trash"/></svg></button><button aria-label="Pick triangles"><svg><use href="#b-pick"/></svg></button><button aria-label="Remove faces"><svg><use href="#b-del"/></svg></button><button aria-label="Move triangles"><svg><use href="#b-hand"/></svg></button>
        </fieldset>
        <label for="help">Help text :</label>
        <div class="helpbox">
          <textarea id="help" readonly wrap="off">Selected object: shell
2. cellphone (Repaired)

Shell status (error filter: Normal/Part):
- verified, repaired
- shell can be saved and then printed.</textarea>
          <div class="vbar"><i class="up"></i><i class="down"></i></div>
          <div class="hbar"><i class="lt"></i><i class="rt"></i></div>
        </div>
      </div>
    </aside>
  </main>

  <footer class="status"><span class="msg">For Help, press F1</span><span class="cell wide"></span><span class="cell"></span><span class="cell mode">Select</span><span class="cell last"><svg viewBox="0 0 12 12"><path d="M8 1h2v2H8zM4 5h2v2H4zM8 5h2v2H8zM0 9h2v2H0zM4 9h2v2H4zM8 9h2v2H8z" fill="#24508f"/></svg></span></footer>
</div>
</body>
</html>
```
FILE: styles.css
```css
* { box-sizing: border-box; }
html, body { height: 100%; }
body { margin: 0; background: #0b1530; font: 11px/14px "Noto Sans", "Open Sans", sans-serif; color: #15428b; overflow: hidden; }
button { font: inherit; color: inherit; background: none; border: 0; padding: 0; margin: 0; white-space: nowrap; }
h1, h2, ul { margin: 0; padding: 0; font: inherit; list-style: none; }
svg { display: block; }
.defs { position: absolute; width: 0; height: 0; }

.app { height: 100vh; padding: 3px 1px 0 2px; display: flex; flex-direction: column; }

.titlebar { flex: none; height: 29px; display: flex; align-items: center; gap: 6px; padding-left: 8px; background: #fff; border-radius: 8px 8px 0 0; color: #000; }
.titlebar h1 { flex: 1; }
.logo { width: 14px; height: 16px; }
.wincontrols { display: flex; }
.wincontrols button { width: 46px; height: 26px; display: grid; place-items: center; }
.wincontrols svg { width: 11px; height: 11px; fill: none; stroke: #111; stroke-width: 1; }

.menubar { flex: none; height: 32px; display: flex; align-items: center; gap: 15px; background: #bfdbff; font-family: "Open Sans", "Noto Sans", sans-serif; }
.grip { flex: none; width: 10px; height: 22px; background: radial-gradient(circle, #6f9ad6 1px, transparent 1px) center / 4px 4px repeat-y; }
.menubar .grip { width: 8px; margin-right: -8px; }

.toolbars { flex: none; height: 34px; display: flex; background: #bfdbff; }
.toolbar { flex: none; display: flex; align-items: center; height: 34px; background: linear-gradient(#e3efff, #d5e5fb 50%, #c4dcfb); border-bottom: 1px solid #6f9dd9; border-radius: 3px; }
.toolbar:first-child { width: 425px; }
.toolbar:first-child .grip { width: 9px; }
.toolbar.main { margin-right: 2px; }
.toolbar button { flex: none; width: 30px; height: 30px; display: grid; place-items: center; }
.toolbar svg { width: 24px; height: 24px; }
.toolbar .on { border: 1px solid #b58c4c; background: #fbe0ba; border-radius: 3px; }
.toolbar .hot { border: 1px solid #e0b77c; background: linear-gradient(#fbc283, #ffdca0); border-radius: 2px; }
.toolbar.axes { flex: 0 1 127px; overflow: hidden; min-width: 40px; border-right: 3px solid #d0e2fa; }
.sep { flex: none; width: 8px; height: 18px; background: linear-gradient(90deg, transparent 3px, #88aede 3px, #88aede 4px, #fff 4px, #fff 5px, transparent 5px); }
.axis { width: 24px; height: 24px; border: 2px solid #08086c; background: #fff; color: #111; display: grid; place-items: center; font-size: 14px; }

.infobar { flex: none; height: 37px; display: flex; align-items: flex-start; gap: 6px; padding: 5px 5px 0 4px; background: #bfdbff; }
.message { flex: 1; height: 28px; background: #ffffe1; border: 1px solid #8ba0bd; display: flex; align-items: center; padding-left: 4px; }
.info { width: 16px; height: 16px; border-radius: 8px; background: radial-gradient(circle at 40% 35%, #ffd2a8, #e17d42); color: #a12a0c; font: bold 12px/16px "Liberation Serif", serif; text-align: center; }
.infobar button { width: 12px; height: 20px; background: #fff; border: 1px solid #3c4c70; color: #111; font-size: 12px; }

.workspace { flex: 1; min-height: 0; display: flex; background: #bfdbff; }
.panelhead { flex: none; height: 21px; display: flex; align-items: center; gap: 7px; padding: 0 5px 0 3px; background: #e0ebfa; border-bottom: 1px solid #d4e4fa; }
.panelhead h2 { flex: 1; }
.panelhead svg { width: 10px; height: 10px; }
.panelhead.dim { background: #b6cde9; padding-left: 2px; }

.left { flex: none; width: 229px; display: flex; flex-direction: column; padding-bottom: 3px; }
.treetools { flex: none; height: 32px; display: flex; align-items: center; gap: 10px; padding-left: 11px; }
.treetools svg { width: 15px; height: 13px; }
.minus { width: 12px; height: 12px; background: linear-gradient(#111, #111) center / 5px 1px no-repeat #fff; border: 1px solid #222; }
.framed { width: 16px; height: 16px; border: 1px solid #111; background: #e4f0dc; display: grid; place-items: center; }
.treebox { flex: 1; min-height: 0; margin: 0 1px 5px 4px; display: flex; background: #fff; border: 1px solid #6c7f9c; border-width: 1px 0 0 2px; }
.tree { flex: 1; overflow: hidden; line-height: 18px; color: #000; }
.tree li { height: 18px; display: flex; align-items: center; gap: 7px; padding-left: 39px; background: repeating-linear-gradient(90deg, #999 0 1px, transparent 1px 2px) 27px 9px / 11px 1px no-repeat, repeating-linear-gradient(#999 0 1px, transparent 1px 2px) 27px 0 / 1px 18px no-repeat; }
.tree li.all, .tree li.shell { background: none; padding-left: 0; }
.tree li.all { gap: 8px; }
.tree svg { flex: none; width: 12px; height: 13px; }
.tree b { white-space: nowrap; padding: 0 1px; }
.tree li.shell { padding-left: 3px; gap: 7px; }
.shell b { background: #0a78d4; color: #fff; outline: 1px dotted #7a4a20; outline-offset: -1px; padding: 0 1px; }
.box { flex: none; width: 9px; height: 9px; border: 1px solid #8593a8; background: linear-gradient(#222, #222) center / 5px 1px no-repeat #fff; display: inline-block; }
.box.plus { background: linear-gradient(#446, #446) center / 5px 1px no-repeat, linear-gradient(#446, #446) center / 1px 5px no-repeat #fff; margin-right: 8px; }
.treescroll { flex: none; width: 16px; background: #f0f0f0; display: flex; justify-content: center; padding-top: 17px; }
.treescroll span { width: 2px; height: 16px; background: #858585; }

.props { flex: none; height: 195px; margin-left: 3px; border: 1px solid #8eaedb; background: #fff; display: flex; }
.props table { width: 100%; height: 100%; border-collapse: collapse; table-layout: fixed; font: 11px/14px "Liberation Sans", Arial, sans-serif; color: #111; }
.props th, .props td { height: 17px; padding: 0 0 0 4px; text-align: left; font-weight: 400; border-bottom: 1px solid #ececec; white-space: nowrap; overflow: hidden; }
.props th { width: 92px; padding-left: 5px; border-right: 1px solid #ececec; }
.props .rest th, .props .rest td { height: auto; border-bottom: 0; }

.viewport { flex: 1; min-width: 0; margin: 1px 6px 2px 4px; border: 1px solid #7c6a74; overflow: hidden; border-right-color: #fff; }
.viewport svg { width: 100%; height: 100%; }
.vlabel { font: 12px "Noto Sans", sans-serif; fill: #f7f21e; }

.right { flex: none; width: 336px; display: flex; flex-direction: column; padding-bottom: 2px; }
.tabs { flex: none; display: flex; align-items: flex-end; height: 23px; gap: 10px; padding-left: 2px; }
.tabs button { height: 20px; padding: 0 2px; }
.tabs .active { background: #edf4ff; border: 1px solid #8db2e3; border-bottom: 0; border-radius: 2px 2px 0 0; padding: 0 3px; }
.page { flex: 1; min-height: 0; display: flex; flex-direction: column; gap: 4px; margin: 0 3px 0 0; padding: 8px 13px 11px 11px; border: 1px solid #d7e7fb; }
.row { display: flex; gap: 4px; margin-bottom: 2px; }
fieldset { margin: 0; min-width: 0; padding: 1px 8px 5px; border: 1px solid #8b9cb1; box-shadow: 1px 1px #f2f8ff, inset 1px 1px #f2f8ff; display: flex; gap: 7px; }
fieldset.tight { gap: 0; padding: 0 2px 2px 3px; }
fieldset.tight.edges { padding-right: 7px; }
legend { padding: 0 1px; height: 14px; line-height: 14px; margin-left: -1px; white-space: nowrap; }
.tight legend { margin-left: 4px; }
fieldset button { flex: none; width: 42px; height: 42px; border: 1px solid #1b1f66; border-radius: 8px; background: radial-gradient(ellipse at 50% 100%, #9a9cc0, transparent 60%), linear-gradient(#47499b 0, #5d61b0 48%, #3b3c8d 52%, #44468f); overflow: hidden; }
fieldset svg { width: 40px; height: 40px; }
.page label { margin-top: 1px; margin-bottom: -1px; }
.helpbox { flex: 1; min-height: 0; display: grid; grid-template: 1fr 17px / 1fr 17px; border: 1px solid #fff; border-top: 2px solid #75797f; border-left: 2px solid #75797f; background: #f0f0f0; margin-right: -3px; }
textarea { resize: none; border: 0; margin: 0; padding: 0 3px; font: 11px/15px "Noto Sans", sans-serif; color: #111; background: #fff; overflow: hidden; outline: 0; }
.vbar, .hbar { display: flex; justify-content: space-between; align-items: center; padding: 6px 4px; }
.vbar { flex-direction: column; padding: 5px 4px; }
.helpbox i { width: 0; height: 0; border: 4px solid transparent; }
.helpbox .up { border-top: 0; border-bottom: 6px solid #a0a0a0; }
.helpbox .down { border-bottom: 0; border-top: 6px solid #a0a0a0; }
.helpbox .lt { border-left: 0; border-right: 6px solid #a0a0a0; }
.helpbox .rt { border-right: 0; border-left: 6px solid #a0a0a0; }

.status { flex: none; height: 18px; display: flex; border-top: 1px solid #567db0; background: linear-gradient(#d9e8fc, #b5d2f7); border-radius: 0 0 6px 6px; }
.msg { flex: 1; padding: 2px 3px 0; }
.cell { width: 126px; padding: 2px 4px 0; border-left: 1px solid #8fb0dc; box-shadow: inset 1px 0 #fff; }
.cell.wide { width: 206px; }
.cell.mode { width: 86px; }
.cell.last { width: 18px; }
.cell svg { width: 12px; height: 12px; }
```
